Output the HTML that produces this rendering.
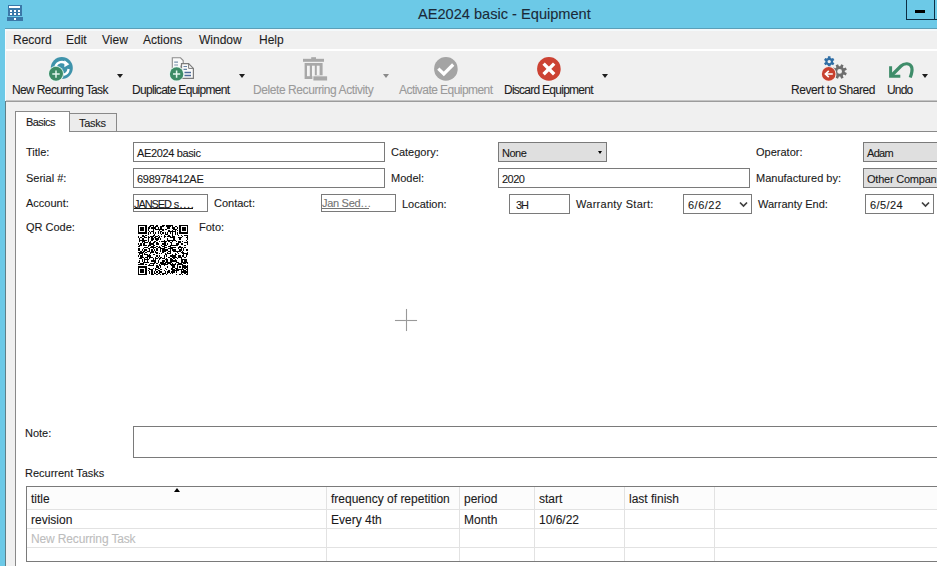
<!DOCTYPE html>
<html><head><meta charset="utf-8">
<style>
html,body{margin:0;padding:0;}
body{width:937px;height:566px;overflow:hidden;position:relative;background:#f0f0f0;font-family:"Liberation Sans",sans-serif;color:#000;}
.t{-webkit-text-stroke:0.1px currentColor;}
.a{position:absolute;}
.t{position:absolute;white-space:nowrap;}
.m{font-size:12px;line-height:12px;color:#1e1e1e;}
.tb{font-size:12px;line-height:12px;color:#1e1e1e;letter-spacing:-0.55px;}
.dis{color:#9a9a9a;}
.l{font-size:11px;line-height:11px;color:#1a1a1a;}
.box{position:absolute;box-sizing:border-box;border:1px solid #7a7a7a;background:#fff;}
.gbox{position:absolute;box-sizing:border-box;border:1px solid #7a7a7a;background:#dfdfdf;}
.g{font-size:12px;line-height:12px;color:#1a1a1a;}
.arr{position:absolute;width:0;height:0;border-left:3.5px solid transparent;border-right:3.5px solid transparent;border-top:4px solid #1e1e1e;}
</style></head>
<body>
<!-- title bar -->
<div class="a" style="left:0;top:0;width:937px;height:29px;background:#6cc9e7;"></div>
<div class="a" style="left:5px;top:28px;width:932px;height:1px;background:#5b9fb8;"></div>
<div class="a" style="left:0;top:0;width:5px;height:566px;background:#6cc9e7;"></div>
<div class="a" style="left:5px;top:29px;width:1px;height:72px;background:#f6fbfd;"></div>
<div class="a" style="left:5px;top:101px;width:1px;height:465px;background:#5f7f88;"></div>
<!-- app icon -->
<svg class="a" style="left:7px;top:5px" width="16" height="16" viewBox="0 0 16 16">
<rect x="1" y="0" width="14" height="11" fill="#3b78a8"/>
<rect x="2" y="1" width="11" height="2" fill="#fff"/>
<rect x="3" y="5" width="2" height="2" fill="#fff"/><rect x="7" y="5" width="2" height="2" fill="#fff"/><rect x="11" y="5" width="2" height="2" fill="#fff"/>
<rect x="3" y="8" width="2" height="2" fill="#fff"/><rect x="7" y="8" width="2" height="2" fill="#fff"/><rect x="11" y="8" width="2" height="2" fill="#fff"/>
<rect x="0" y="12" width="16" height="4" fill="#3b78a8"/>
<rect x="7" y="13" width="2" height="2" fill="#fff"/>
</svg>
<div class="t" style="left:418px;top:7px;font-size:14.6px;line-height:15px;color:#1b2a38;">AE2024 basic - Equipment</div>
<!-- minimize -->
<div class="a" style="left:906px;top:-1px;width:27px;height:20px;border:1px solid #0d2f45;border-top:none;"></div>
<div class="a" style="left:915px;top:10px;width:10px;height:3px;background:#000;"></div>
<div class="a" style="left:934px;top:19px;width:3px;height:1px;background:#0d2f45;"></div>

<!-- menu -->
<div class="a" style="left:6px;top:29px;width:931px;height:2px;background:#f4f9fb;"></div>
<div class="a" style="left:6px;top:49px;width:931px;height:2px;background:#ffffff;"></div>
<div class="t m" style="left:13px;top:34px;">Record</div>
<div class="t m" style="left:66px;top:34px;">Edit</div>
<div class="t m" style="left:102px;top:34px;">View</div>
<div class="t m" style="left:143px;top:34px;">Actions</div>
<div class="t m" style="left:199px;top:34px;">Window</div>
<div class="t m" style="left:259px;top:34px;">Help</div>

<!-- toolbar -->
<div class="a" style="left:6px;top:100px;width:931px;height:1px;background:#c4c4c4;"></div>
<div class="a" style="left:6px;top:101px;width:931px;height:1px;background:#9c9c9c;"></div>
<div class="t tb" style="left:12px;top:84px;letter-spacing:-0.63px;">New Recurring Task</div>
<div class="t tb" style="left:132px;top:84px;letter-spacing:-0.7px;">Duplicate Equipment</div>
<div class="t tb dis" style="left:253px;top:84px;letter-spacing:-0.42px;">Delete Recurring Activity</div>
<div class="t tb dis" style="left:399px;top:84px;">Activate Equipment</div>
<div class="t tb" style="left:504px;top:84px;letter-spacing:-0.74px;">Discard Equipment</div>
<div class="t tb" style="left:791px;top:84px;letter-spacing:-0.42px;">Revert to Shared</div>
<div class="t tb" style="left:887px;top:84px;letter-spacing:-0.8px;">Undo</div>
<div class="arr" style="left:117px;top:74px;"></div>
<div class="arr" style="left:239px;top:74px;"></div>
<div class="arr" style="left:383px;top:74px;border-top-color:#8a8a8a;"></div>
<div class="arr" style="left:602px;top:74px;"></div>
<div class="arr" style="left:922px;top:74px;"></div>

<!-- toolbar icons -->
<svg class="a" style="left:0;top:0" width="937" height="102" viewBox="0 0 937 102">
<!-- new recurring -->
<circle cx="61.8" cy="68" r="11" fill="#3f93ab"/>
<path d="M55.5 66.5 A6.8 6.8 0 0 1 66.5 63.8" fill="none" stroke="#fff" stroke-width="2.3"/>
<path d="M64.5 60.2 L69.3 64.2 L64.3 67.2 Z" fill="#fff"/>
<path d="M68.6 69 A6.8 6.8 0 0 1 63.5 74.8" fill="none" stroke="#fff" stroke-width="2.3"/>
<circle cx="56" cy="73.8" r="7.9" fill="#e6f7f2"/>
<circle cx="56" cy="73.8" r="7" fill="#3d8b66"/>
<path d="M52.3 74.1 H59.7 M56 70.4 V77.8" stroke="#e4f6ee" stroke-width="1.5"/>
<!-- duplicate -->
<path d="M172.3 57.8 H180.5 L183.2 60.5 V66 H181 V78 H172.3 Z" fill="#fafafa" stroke="#8c8c8c" stroke-width="1.1"/>
<path d="M174.2 62.2 H178 M174.2 65 H178" stroke="#7891ab" stroke-width="1.2"/>
<path d="M181.5 63.6 H188.6 L193.4 68.4 V78.3 H181.5 Z" fill="#fafafa" stroke="#7c7c7c" stroke-width="1.2"/>
<path d="M188.6 63.6 V68.4 H193.4" fill="none" stroke="#7c7c7c" stroke-width="1"/>
<path d="M183.5 66.5 H187 M183.5 69.3 H187" stroke="#6a86a8" stroke-width="1.2"/>
<path d="M184.5 72.5 H191 M184.5 75.5 H191" stroke="#4c6b9a" stroke-width="1.4"/>
<circle cx="176.6" cy="73.9" r="7.5" fill="#e6f7f2"/>
<circle cx="176.6" cy="73.9" r="6.7" fill="#3d8b66"/>
<path d="M173 74.1 H180.2 M176.6 70.5 V77.7" stroke="#e4f6ee" stroke-width="1.5"/>
<!-- trash -->
<rect x="311.2" y="57.2" width="4.8" height="2" fill="#a8a8a8"/>
<rect x="303" y="58.8" width="21" height="3" fill="#a8a8a8"/>
<path d="M304.6 63 H322.6 V76 H313 V79 H304.6 Z" fill="#a8a8a8"/>
<rect x="307" y="65.7" width="2.8" height="10.5" fill="#f4f4f4"/>
<rect x="312" y="65.7" width="2.8" height="10.5" fill="#f4f4f4"/>
<rect x="316.8" y="65.7" width="2.8" height="9.5" fill="#f4f4f4"/>
<rect x="312.4" y="75.3" width="15.6" height="6" fill="#f0f0f0"/>
<rect x="313.4" y="76.3" width="13.7" height="4.2" fill="#a8a8a8"/>
<!-- check -->
<circle cx="445.9" cy="68.9" r="11.8" fill="#a4a4a4"/>
<path d="M438.3 68.6 L443.8 73.9 L453.2 64.5" fill="none" stroke="#fff" stroke-width="3.2"/>
<!-- discard -->
<circle cx="548.9" cy="68.9" r="11.8" fill="#cc4233"/>
<path d="M543.6 63.6 L554.2 74.2 M554.2 63.6 L543.6 74.2" stroke="#fff" stroke-width="3.4"/>
<!-- revert gears -->
<path d="M827.82 57.95 L827.94 56.35 L830.46 56.35 L830.58 57.95 L831.67 58.58 L833.12 57.88 L834.38 60.07 L833.05 60.97 L833.05 62.23 L834.38 63.13 L833.12 65.32 L831.67 64.62 L830.58 65.25 L830.46 66.85 L827.94 66.85 L827.82 65.25 L826.73 64.62 L825.28 65.32 L824.02 63.13 L825.35 62.23 L825.35 60.97 L824.02 60.07 L825.28 57.88 L826.73 58.58Z M830.90 61.60 A1.7 1.7 0 1 0 827.50 61.60 A1.7 1.7 0 1 0 830.90 61.60Z" fill="#2f6ea5" fill-rule="evenodd"/>
<path d="M840.23 66.24 L841.19 64.17 L843.59 65.17 L842.80 67.30 L843.70 68.20 L845.83 67.41 L846.83 69.81 L844.76 70.77 L844.76 72.03 L846.83 72.99 L845.83 75.39 L843.70 74.60 L842.80 75.50 L843.59 77.63 L841.19 78.63 L840.23 76.56 L838.97 76.56 L838.01 78.63 L835.61 77.63 L836.40 75.50 L835.50 74.60 L833.37 75.39 L832.37 72.99 L834.44 72.03 L834.44 70.77 L832.37 69.81 L833.37 67.41 L835.50 68.20 L836.40 67.30 L835.61 65.17 L838.01 64.17 L838.97 66.24Z M842.00 71.40 A2.4 2.4 0 1 0 837.20 71.40 A2.4 2.4 0 1 0 842.00 71.40Z" fill="#6e6e6e" fill-rule="evenodd"/>
<circle cx="828.7" cy="73.9" r="7.7" fill="#fbe9e6"/>
<circle cx="828.7" cy="73.9" r="6.8" fill="#c8402e"/>
<path d="M832.8 74 H826 M828.8 70.8 L825.4 74 L828.8 77.2" fill="none" stroke="#fff" stroke-width="1.6"/>
<!-- undo -->
<path d="M891.5 75.5 L901 66 C904 63 910.5 62.5 911.8 67.5 C912.6 71 911.6 74 910.2 77.5" fill="none" stroke="#3f8d6a" stroke-width="3.2"/>
<path d="M890.6 66.3 V76.2 H900.3" fill="none" stroke="#3f8d6a" stroke-width="3"/>
</svg>

<!-- tabs -->
<div class="a" style="left:15px;top:111px;width:55px;height:21px;box-sizing:border-box;border:1px solid #898989;border-bottom:none;background:#fff;z-index:2;"></div>
<div class="a" style="left:68px;top:113px;width:49px;height:19px;box-sizing:border-box;border:1px solid #898989;background:#ececec;"></div>
<div class="a" style="left:15px;top:131px;width:922px;height:435px;box-sizing:border-box;border:1px solid #898989;border-right:none;border-bottom:none;background:#fff;"></div>
<div class="a" style="left:16px;top:130px;width:53px;height:2px;background:#fff;z-index:3;"></div>
<div class="t l" style="left:26px;top:117px;z-index:4;letter-spacing:-0.6px;">Basics</div>
<div class="t l" style="left:79px;top:118px;letter-spacing:-0.3px;">Tasks</div>

<!-- form -->
<div class="t l" style="left:26px;top:147px;">Title:</div>
<div class="t l" style="left:26px;top:173px;">Serial #:</div>
<div class="t l" style="left:26px;top:198px;">Account:</div>
<div class="t l" style="left:26px;top:222px;">QR Code:</div>
<div class="t l" style="left:199px;top:222px;">Foto:</div>
<div class="t l" style="left:25px;top:428px;">Note:</div>
<div class="t l" style="left:25px;top:468px;">Recurrent Tasks</div>
<div class="t l" style="left:214px;top:198px;">Contact:</div>
<div class="t l" style="left:391px;top:147px;">Category:</div>
<div class="t l" style="left:391px;top:173px;">Model:</div>
<div class="t l" style="left:402px;top:199px;">Location:</div>
<div class="t l" style="left:576px;top:199px;letter-spacing:0.27px;">Warranty Start:</div>
<div class="t l" style="left:756px;top:147px;">Operator:</div>
<div class="t l" style="left:756px;top:173px;">Manufactured by:</div>
<div class="t l" style="left:758px;top:199px;">Warranty End:</div>

<div class="box" style="left:133px;top:142px;width:252px;height:20px;"></div>
<div class="t l" style="left:137px;top:148px;letter-spacing:-0.36px;">AE2024 basic</div>
<div class="box" style="left:133px;top:168px;width:252px;height:20px;"></div>
<div class="t l" style="left:137px;top:174px;letter-spacing:-0.3px;">698978412AE</div>
<div class="box" style="left:133px;top:194px;width:75px;height:18px;"></div>
<div class="t l" style="left:134px;top:199px;"><span style="letter-spacing:-1.1px">JANSED</span> s<span style="letter-spacing:0.7px">....</span></div><div class="a" style="left:134px;top:208px;width:59px;height:1px;background:#1a1a1a;"></div>
<div class="box" style="left:321px;top:194px;width:75px;height:18px;"></div>
<div class="t l" style="left:322px;top:198px;color:#747474;letter-spacing:-0.3px;">Jan Sed…</div><div class="a" style="left:322px;top:208px;width:47px;height:1px;background:#747474;"></div>

<div class="gbox" style="left:498px;top:142px;width:109px;height:20px;"></div>
<div class="t l" style="left:502px;top:148px;letter-spacing:-0.5px;">None</div>
<div class="a" style="left:598px;top:151px;width:0;height:0;border-left:2.5px solid transparent;border-right:2.5px solid transparent;border-top:3px solid #000;"></div>
<div class="box" style="left:498px;top:168px;width:252px;height:20px;"></div>
<div class="t l" style="left:502px;top:174px;letter-spacing:-0.5px;">2020</div>
<div class="box" style="left:509px;top:194px;width:61px;height:20px;"></div>
<div class="t l" style="left:516px;top:200px;letter-spacing:-1px;">3H</div>
<div class="box" style="left:683px;top:194px;width:69px;height:20px;"></div>
<div class="t l" style="left:688px;top:200px;letter-spacing:0.5px;">6/6/22</div>
<svg class="a" style="left:739px;top:201px" width="9" height="7" viewBox="0 0 9 7"><path d="M1 1.5 L4.5 5 L8 1.5" fill="none" stroke="#404040" stroke-width="1.7"/></svg>

<div class="gbox" style="left:863px;top:142px;width:80px;height:20px;"></div>
<div class="t l" style="left:867px;top:148px;letter-spacing:-0.7px;">Adam</div>
<div class="gbox" style="left:863px;top:168px;width:80px;height:20px;"></div>
<div class="t l" style="left:867px;top:174px;letter-spacing:-0.22px;">Other Compan</div>
<div class="box" style="left:865px;top:194px;width:69px;height:20px;"></div>
<div class="t l" style="left:870px;top:200px;letter-spacing:0.4px;">6/5/24</div>
<svg class="a" style="left:921px;top:201px" width="9" height="7" viewBox="0 0 9 7"><path d="M1 1.5 L4.5 5 L8 1.5" fill="none" stroke="#404040" stroke-width="1.7"/></svg>

<!-- qr -->
<svg class="a" style="left:138px;top:225px" width="50" height="50" viewBox="0 0 50 50" shape-rendering="crispEdges"><path d="M0.00 0.00h8.54v1.22h-8.54zM12.20 0.00h3.66v1.22h-3.66zM18.29 0.00h1.22v1.22h-1.22zM24.39 0.00h2.44v1.22h-2.44zM28.05 0.00h7.32v1.22h-7.32zM41.46 0.00h8.54v1.22h-8.54zM0.00 1.22h1.22v1.22h-1.22zM7.32 1.22h1.22v1.22h-1.22zM10.98 1.22h2.44v1.22h-2.44zM14.63 1.22h1.22v1.22h-1.22zM17.07 1.22h2.44v1.22h-2.44zM21.95 1.22h3.66v1.22h-3.66zM28.05 1.22h4.88v1.22h-4.88zM34.15 1.22h1.22v1.22h-1.22zM36.59 1.22h2.44v1.22h-2.44zM41.46 1.22h1.22v1.22h-1.22zM48.78 1.22h1.22v1.22h-1.22zM0.00 2.44h1.22v1.22h-1.22zM2.44 2.44h3.66v1.22h-3.66zM7.32 2.44h1.22v1.22h-1.22zM9.76 2.44h2.44v1.22h-2.44zM13.41 2.44h4.88v1.22h-4.88zM19.51 2.44h1.22v1.22h-1.22zM21.95 2.44h2.44v1.22h-2.44zM29.27 2.44h2.44v1.22h-2.44zM34.15 2.44h2.44v1.22h-2.44zM39.02 2.44h1.22v1.22h-1.22zM41.46 2.44h1.22v1.22h-1.22zM43.90 2.44h3.66v1.22h-3.66zM48.78 2.44h1.22v1.22h-1.22zM0.00 3.66h1.22v1.22h-1.22zM2.44 3.66h3.66v1.22h-3.66zM7.32 3.66h1.22v1.22h-1.22zM9.76 3.66h1.22v1.22h-1.22zM14.63 3.66h1.22v1.22h-1.22zM17.07 3.66h8.54v1.22h-8.54zM26.83 3.66h2.44v1.22h-2.44zM35.37 3.66h3.66v1.22h-3.66zM41.46 3.66h1.22v1.22h-1.22zM43.90 3.66h3.66v1.22h-3.66zM48.78 3.66h1.22v1.22h-1.22zM0.00 4.88h1.22v1.22h-1.22zM2.44 4.88h3.66v1.22h-3.66zM7.32 4.88h1.22v1.22h-1.22zM9.76 4.88h1.22v1.22h-1.22zM14.63 4.88h1.22v1.22h-1.22zM20.73 4.88h1.22v1.22h-1.22zM24.39 4.88h1.22v1.22h-1.22zM30.49 4.88h1.22v1.22h-1.22zM34.15 4.88h1.22v1.22h-1.22zM36.59 4.88h1.22v1.22h-1.22zM39.02 4.88h1.22v1.22h-1.22zM41.46 4.88h1.22v1.22h-1.22zM43.90 4.88h3.66v1.22h-3.66zM48.78 4.88h1.22v1.22h-1.22zM0.00 6.10h1.22v1.22h-1.22zM7.32 6.10h1.22v1.22h-1.22zM10.98 6.10h1.22v1.22h-1.22zM13.41 6.10h2.44v1.22h-2.44zM19.51 6.10h1.22v1.22h-1.22zM21.95 6.10h2.44v1.22h-2.44zM30.49 6.10h7.32v1.22h-7.32zM41.46 6.10h1.22v1.22h-1.22zM48.78 6.10h1.22v1.22h-1.22zM0.00 7.32h8.54v1.22h-8.54zM9.76 7.32h1.22v1.22h-1.22zM12.20 7.32h1.22v1.22h-1.22zM14.63 7.32h1.22v1.22h-1.22zM17.07 7.32h1.22v1.22h-1.22zM19.51 7.32h1.22v1.22h-1.22zM21.95 7.32h1.22v1.22h-1.22zM24.39 7.32h1.22v1.22h-1.22zM26.83 7.32h1.22v1.22h-1.22zM29.27 7.32h1.22v1.22h-1.22zM31.71 7.32h1.22v1.22h-1.22zM34.15 7.32h1.22v1.22h-1.22zM36.59 7.32h1.22v1.22h-1.22zM39.02 7.32h1.22v1.22h-1.22zM41.46 7.32h8.54v1.22h-8.54zM9.76 8.54h1.22v1.22h-1.22zM15.85 8.54h1.22v1.22h-1.22zM23.17 8.54h1.22v1.22h-1.22zM26.83 8.54h3.66v1.22h-3.66zM34.15 8.54h1.22v1.22h-1.22zM36.59 8.54h1.22v1.22h-1.22zM39.02 8.54h1.22v1.22h-1.22zM3.66 9.76h2.44v1.22h-2.44zM7.32 9.76h1.22v1.22h-1.22zM14.63 9.76h2.44v1.22h-2.44zM19.51 9.76h1.22v1.22h-1.22zM25.61 9.76h1.22v1.22h-1.22zM30.49 9.76h1.22v1.22h-1.22zM34.15 9.76h1.22v1.22h-1.22zM40.24 9.76h1.22v1.22h-1.22zM42.68 9.76h1.22v1.22h-1.22zM46.34 9.76h3.66v1.22h-3.66zM0.00 10.98h1.22v1.22h-1.22zM3.66 10.98h3.66v1.22h-3.66zM9.76 10.98h1.22v1.22h-1.22zM12.20 10.98h3.66v1.22h-3.66zM17.07 10.98h2.44v1.22h-2.44zM20.73 10.98h1.22v1.22h-1.22zM23.17 10.98h1.22v1.22h-1.22zM25.61 10.98h2.44v1.22h-2.44zM29.27 10.98h3.66v1.22h-3.66zM34.15 10.98h2.44v1.22h-2.44zM43.90 10.98h1.22v1.22h-1.22zM48.78 10.98h1.22v1.22h-1.22zM0.00 12.20h1.22v1.22h-1.22zM2.44 12.20h1.22v1.22h-1.22zM6.10 12.20h2.44v1.22h-2.44zM9.76 12.20h2.44v1.22h-2.44zM13.41 12.20h1.22v1.22h-1.22zM15.85 12.20h2.44v1.22h-2.44zM19.51 12.20h2.44v1.22h-2.44zM25.61 12.20h1.22v1.22h-1.22zM31.71 12.20h4.88v1.22h-4.88zM40.24 12.20h3.66v1.22h-3.66zM47.56 12.20h2.44v1.22h-2.44zM1.22 13.41h1.22v1.22h-1.22zM3.66 13.41h2.44v1.22h-2.44zM9.76 13.41h1.22v1.22h-1.22zM13.41 13.41h2.44v1.22h-2.44zM17.07 13.41h3.66v1.22h-3.66zM21.95 13.41h1.22v1.22h-1.22zM29.27 13.41h1.22v1.22h-1.22zM35.37 13.41h1.22v1.22h-1.22zM41.46 13.41h1.22v1.22h-1.22zM48.78 13.41h1.22v1.22h-1.22zM1.22 14.63h7.32v1.22h-7.32zM9.76 14.63h1.22v1.22h-1.22zM13.41 14.63h1.22v1.22h-1.22zM18.29 14.63h1.22v1.22h-1.22zM25.61 14.63h1.22v1.22h-1.22zM29.27 14.63h8.54v1.22h-8.54zM47.56 14.63h1.22v1.22h-1.22zM1.22 15.85h1.22v1.22h-1.22zM3.66 15.85h3.66v1.22h-3.66zM9.76 15.85h1.22v1.22h-1.22zM12.20 15.85h1.22v1.22h-1.22zM15.85 15.85h2.44v1.22h-2.44zM20.73 15.85h1.22v1.22h-1.22zM23.17 15.85h6.10v1.22h-6.10zM30.49 15.85h1.22v1.22h-1.22zM34.15 15.85h1.22v1.22h-1.22zM37.80 15.85h1.22v1.22h-1.22zM40.24 15.85h2.44v1.22h-2.44zM43.90 15.85h1.22v1.22h-1.22zM48.78 15.85h1.22v1.22h-1.22zM3.66 17.07h1.22v1.22h-1.22zM6.10 17.07h3.66v1.22h-3.66zM10.98 17.07h2.44v1.22h-2.44zM14.63 17.07h2.44v1.22h-2.44zM18.29 17.07h1.22v1.22h-1.22zM25.61 17.07h2.44v1.22h-2.44zM31.71 17.07h2.44v1.22h-2.44zM40.24 17.07h2.44v1.22h-2.44zM46.34 17.07h3.66v1.22h-3.66zM0.00 18.29h1.22v1.22h-1.22zM2.44 18.29h1.22v1.22h-1.22zM4.88 18.29h2.44v1.22h-2.44zM10.98 18.29h4.88v1.22h-4.88zM18.29 18.29h2.44v1.22h-2.44zM24.39 18.29h3.66v1.22h-3.66zM29.27 18.29h1.22v1.22h-1.22zM32.93 18.29h1.22v1.22h-1.22zM37.80 18.29h3.66v1.22h-3.66zM42.68 18.29h2.44v1.22h-2.44zM48.78 18.29h1.22v1.22h-1.22zM1.22 19.51h2.44v1.22h-2.44zM4.88 19.51h3.66v1.22h-3.66zM9.76 19.51h3.66v1.22h-3.66zM14.63 19.51h2.44v1.22h-2.44zM23.17 19.51h1.22v1.22h-1.22zM25.61 19.51h3.66v1.22h-3.66zM31.71 19.51h8.54v1.22h-8.54zM46.34 19.51h1.22v1.22h-1.22zM0.00 20.73h2.44v1.22h-2.44zM9.76 20.73h1.22v1.22h-1.22zM13.41 20.73h2.44v1.22h-2.44zM18.29 20.73h1.22v1.22h-1.22zM20.73 20.73h1.22v1.22h-1.22zM24.39 20.73h2.44v1.22h-2.44zM30.49 20.73h2.44v1.22h-2.44zM41.46 20.73h1.22v1.22h-1.22zM6.10 21.95h3.66v1.22h-3.66zM12.20 21.95h6.10v1.22h-6.10zM19.51 21.95h3.66v1.22h-3.66zM25.61 21.95h3.66v1.22h-3.66zM31.71 21.95h6.10v1.22h-6.10zM40.24 21.95h4.88v1.22h-4.88zM46.34 21.95h1.22v1.22h-1.22zM0.00 23.17h2.44v1.22h-2.44zM4.88 23.17h1.22v1.22h-1.22zM9.76 23.17h2.44v1.22h-2.44zM14.63 23.17h1.22v1.22h-1.22zM18.29 23.17h1.22v1.22h-1.22zM21.95 23.17h4.88v1.22h-4.88zM30.49 23.17h4.88v1.22h-4.88zM40.24 23.17h1.22v1.22h-1.22zM42.68 23.17h1.22v1.22h-1.22zM45.12 23.17h1.22v1.22h-1.22zM0.00 24.39h2.44v1.22h-2.44zM3.66 24.39h1.22v1.22h-1.22zM6.10 24.39h2.44v1.22h-2.44zM10.98 24.39h1.22v1.22h-1.22zM13.41 24.39h1.22v1.22h-1.22zM15.85 24.39h1.22v1.22h-1.22zM18.29 24.39h1.22v1.22h-1.22zM21.95 24.39h1.22v1.22h-1.22zM24.39 24.39h6.10v1.22h-6.10zM31.71 24.39h1.22v1.22h-1.22zM34.15 24.39h3.66v1.22h-3.66zM41.46 24.39h2.44v1.22h-2.44zM45.12 24.39h1.22v1.22h-1.22zM47.56 24.39h2.44v1.22h-2.44zM2.44 25.61h1.22v1.22h-1.22zM4.88 25.61h2.44v1.22h-2.44zM8.54 25.61h3.66v1.22h-3.66zM13.41 25.61h2.44v1.22h-2.44zM17.07 25.61h1.22v1.22h-1.22zM21.95 25.61h1.22v1.22h-1.22zM24.39 25.61h3.66v1.22h-3.66zM30.49 25.61h2.44v1.22h-2.44zM35.37 25.61h7.32v1.22h-7.32zM43.90 25.61h1.22v1.22h-1.22zM0.00 26.83h6.10v1.22h-6.10zM7.32 26.83h1.22v1.22h-1.22zM12.20 26.83h3.66v1.22h-3.66zM17.07 26.83h2.44v1.22h-2.44zM24.39 26.83h1.22v1.22h-1.22zM29.27 26.83h1.22v1.22h-1.22zM31.71 26.83h1.22v1.22h-1.22zM39.02 26.83h1.22v1.22h-1.22zM42.68 26.83h3.66v1.22h-3.66zM48.78 26.83h1.22v1.22h-1.22zM1.22 28.05h3.66v1.22h-3.66zM6.10 28.05h1.22v1.22h-1.22zM12.20 28.05h1.22v1.22h-1.22zM18.29 28.05h1.22v1.22h-1.22zM20.73 28.05h1.22v1.22h-1.22zM23.17 28.05h1.22v1.22h-1.22zM26.83 28.05h1.22v1.22h-1.22zM29.27 28.05h3.66v1.22h-3.66zM36.59 28.05h1.22v1.22h-1.22zM40.24 28.05h1.22v1.22h-1.22zM43.90 28.05h6.10v1.22h-6.10zM1.22 29.27h1.22v1.22h-1.22zM3.66 29.27h1.22v1.22h-1.22zM6.10 29.27h3.66v1.22h-3.66zM10.98 29.27h1.22v1.22h-1.22zM14.63 29.27h2.44v1.22h-2.44zM26.83 29.27h2.44v1.22h-2.44zM34.15 29.27h1.22v1.22h-1.22zM36.59 29.27h2.44v1.22h-2.44zM45.12 29.27h1.22v1.22h-1.22zM47.56 29.27h2.44v1.22h-2.44zM0.00 30.49h1.22v1.22h-1.22zM2.44 30.49h2.44v1.22h-2.44zM8.54 30.49h4.88v1.22h-4.88zM18.29 30.49h1.22v1.22h-1.22zM20.73 30.49h1.22v1.22h-1.22zM25.61 30.49h1.22v1.22h-1.22zM28.05 30.49h1.22v1.22h-1.22zM31.71 30.49h6.10v1.22h-6.10zM40.24 30.49h2.44v1.22h-2.44zM43.90 30.49h2.44v1.22h-2.44zM47.56 30.49h1.22v1.22h-1.22zM2.44 31.71h3.66v1.22h-3.66zM7.32 31.71h2.44v1.22h-2.44zM10.98 31.71h3.66v1.22h-3.66zM17.07 31.71h1.22v1.22h-1.22zM19.51 31.71h1.22v1.22h-1.22zM21.95 31.71h2.44v1.22h-2.44zM25.61 31.71h1.22v1.22h-1.22zM30.49 31.71h1.22v1.22h-1.22zM34.15 31.71h4.88v1.22h-4.88zM40.24 31.71h3.66v1.22h-3.66zM46.34 31.71h1.22v1.22h-1.22zM1.22 32.93h2.44v1.22h-2.44zM6.10 32.93h1.22v1.22h-1.22zM8.54 32.93h1.22v1.22h-1.22zM10.98 32.93h1.22v1.22h-1.22zM14.63 32.93h1.22v1.22h-1.22zM17.07 32.93h2.44v1.22h-2.44zM20.73 32.93h2.44v1.22h-2.44zM24.39 32.93h2.44v1.22h-2.44zM28.05 32.93h1.22v1.22h-1.22zM31.71 32.93h2.44v1.22h-2.44zM35.37 32.93h1.22v1.22h-1.22zM39.02 32.93h1.22v1.22h-1.22zM42.68 32.93h1.22v1.22h-1.22zM3.66 34.15h1.22v1.22h-1.22zM6.10 34.15h4.88v1.22h-4.88zM14.63 34.15h1.22v1.22h-1.22zM17.07 34.15h1.22v1.22h-1.22zM20.73 34.15h1.22v1.22h-1.22zM26.83 34.15h3.66v1.22h-3.66zM31.71 34.15h3.66v1.22h-3.66zM36.59 34.15h1.22v1.22h-1.22zM42.68 34.15h6.10v1.22h-6.10zM1.22 35.37h1.22v1.22h-1.22zM3.66 35.37h1.22v1.22h-1.22zM6.10 35.37h1.22v1.22h-1.22zM8.54 35.37h1.22v1.22h-1.22zM13.41 35.37h4.88v1.22h-4.88zM19.51 35.37h1.22v1.22h-1.22zM24.39 35.37h2.44v1.22h-2.44zM28.05 35.37h2.44v1.22h-2.44zM31.71 35.37h7.32v1.22h-7.32zM42.68 35.37h2.44v1.22h-2.44zM46.34 35.37h2.44v1.22h-2.44zM0.00 36.59h2.44v1.22h-2.44zM4.88 36.59h6.10v1.22h-6.10zM15.85 36.59h2.44v1.22h-2.44zM19.51 36.59h1.22v1.22h-1.22zM21.95 36.59h3.66v1.22h-3.66zM26.83 36.59h7.32v1.22h-7.32zM37.80 36.59h3.66v1.22h-3.66zM42.68 36.59h7.32v1.22h-7.32zM2.44 37.80h3.66v1.22h-3.66zM12.20 37.80h4.88v1.22h-4.88zM18.29 37.80h1.22v1.22h-1.22zM21.95 37.80h6.10v1.22h-6.10zM29.27 37.80h3.66v1.22h-3.66zM34.15 37.80h1.22v1.22h-1.22zM36.59 37.80h1.22v1.22h-1.22zM40.24 37.80h3.66v1.22h-3.66zM45.12 37.80h2.44v1.22h-2.44zM48.78 37.80h1.22v1.22h-1.22zM0.00 39.02h6.10v1.22h-6.10zM7.32 39.02h1.22v1.22h-1.22zM10.98 39.02h1.22v1.22h-1.22zM14.63 39.02h1.22v1.22h-1.22zM20.73 39.02h1.22v1.22h-1.22zM23.17 39.02h7.32v1.22h-7.32zM31.71 39.02h6.10v1.22h-6.10zM39.02 39.02h6.10v1.22h-6.10zM9.76 40.24h6.10v1.22h-6.10zM18.29 40.24h1.22v1.22h-1.22zM20.73 40.24h2.44v1.22h-2.44zM25.61 40.24h1.22v1.22h-1.22zM32.93 40.24h3.66v1.22h-3.66zM39.02 40.24h1.22v1.22h-1.22zM43.90 40.24h3.66v1.22h-3.66zM48.78 40.24h1.22v1.22h-1.22zM0.00 41.46h8.54v1.22h-8.54zM18.29 41.46h2.44v1.22h-2.44zM21.95 41.46h1.22v1.22h-1.22zM29.27 41.46h1.22v1.22h-1.22zM34.15 41.46h2.44v1.22h-2.44zM39.02 41.46h1.22v1.22h-1.22zM41.46 41.46h1.22v1.22h-1.22zM43.90 41.46h6.10v1.22h-6.10zM0.00 42.68h1.22v1.22h-1.22zM7.32 42.68h1.22v1.22h-1.22zM9.76 42.68h2.44v1.22h-2.44zM14.63 42.68h1.22v1.22h-1.22zM17.07 42.68h1.22v1.22h-1.22zM19.51 42.68h2.44v1.22h-2.44zM26.83 42.68h1.22v1.22h-1.22zM32.93 42.68h2.44v1.22h-2.44zM36.59 42.68h3.66v1.22h-3.66zM43.90 42.68h1.22v1.22h-1.22zM46.34 42.68h1.22v1.22h-1.22zM48.78 42.68h1.22v1.22h-1.22zM0.00 43.90h1.22v1.22h-1.22zM2.44 43.90h3.66v1.22h-3.66zM7.32 43.90h1.22v1.22h-1.22zM10.98 43.90h3.66v1.22h-3.66zM17.07 43.90h2.44v1.22h-2.44zM21.95 43.90h2.44v1.22h-2.44zM28.05 43.90h1.22v1.22h-1.22zM32.93 43.90h3.66v1.22h-3.66zM37.80 43.90h8.54v1.22h-8.54zM47.56 43.90h2.44v1.22h-2.44zM0.00 45.12h1.22v1.22h-1.22zM2.44 45.12h3.66v1.22h-3.66zM7.32 45.12h1.22v1.22h-1.22zM9.76 45.12h1.22v1.22h-1.22zM13.41 45.12h1.22v1.22h-1.22zM17.07 45.12h1.22v1.22h-1.22zM19.51 45.12h2.44v1.22h-2.44zM25.61 45.12h1.22v1.22h-1.22zM30.49 45.12h1.22v1.22h-1.22zM34.15 45.12h7.32v1.22h-7.32zM42.68 45.12h1.22v1.22h-1.22zM45.12 45.12h2.44v1.22h-2.44zM48.78 45.12h1.22v1.22h-1.22zM0.00 46.34h1.22v1.22h-1.22zM2.44 46.34h3.66v1.22h-3.66zM7.32 46.34h1.22v1.22h-1.22zM10.98 46.34h1.22v1.22h-1.22zM13.41 46.34h1.22v1.22h-1.22zM15.85 46.34h1.22v1.22h-1.22zM18.29 46.34h1.22v1.22h-1.22zM20.73 46.34h3.66v1.22h-3.66zM26.83 46.34h1.22v1.22h-1.22zM29.27 46.34h2.44v1.22h-2.44zM32.93 46.34h3.66v1.22h-3.66zM37.80 46.34h1.22v1.22h-1.22zM42.68 46.34h7.32v1.22h-7.32zM0.00 47.56h1.22v1.22h-1.22zM7.32 47.56h1.22v1.22h-1.22zM10.98 47.56h1.22v1.22h-1.22zM13.41 47.56h1.22v1.22h-1.22zM15.85 47.56h2.44v1.22h-2.44zM19.51 47.56h2.44v1.22h-2.44zM24.39 47.56h3.66v1.22h-3.66zM29.27 47.56h1.22v1.22h-1.22zM31.71 47.56h1.22v1.22h-1.22zM34.15 47.56h1.22v1.22h-1.22zM42.68 47.56h1.22v1.22h-1.22zM46.34 47.56h1.22v1.22h-1.22zM48.78 47.56h1.22v1.22h-1.22zM0.00 48.78h8.54v1.22h-8.54zM13.41 48.78h2.44v1.22h-2.44zM18.29 48.78h1.22v1.22h-1.22zM21.95 48.78h1.22v1.22h-1.22zM24.39 48.78h1.22v1.22h-1.22zM28.05 48.78h1.22v1.22h-1.22zM37.80 48.78h1.22v1.22h-1.22zM41.46 48.78h1.22v1.22h-1.22zM43.90 48.78h1.22v1.22h-1.22zM47.56 48.78h2.44v1.22h-2.44z" fill="#000"/></svg>
<!-- crosshair -->
<div class="a" style="left:395px;top:320px;width:22px;height:1px;background:#999;box-shadow:0 0 1px #ccc;"></div>
<div class="a" style="left:406px;top:309px;width:1px;height:22px;background:#999;box-shadow:0 0 1px #ccc;"></div>

<div class="box" style="left:133px;top:426px;width:810px;height:32px;"></div>

<!-- grid -->
<div class="a" style="left:26px;top:486px;width:920px;height:76px;box-sizing:border-box;border:1px solid #7a7a7a;border-right:none;background:#fff;"></div>
<div class="a" style="left:27px;top:487px;width:910px;height:22px;background:#fcfcfc;"></div>
<div class="a" style="left:27px;top:509px;width:910px;height:1px;background:#e2e2e2;"></div>
<div class="a" style="left:27px;top:528px;width:910px;height:1px;background:#e2e2e2;"></div>
<div class="a" style="left:27px;top:547px;width:910px;height:1px;background:#e2e2e2;"></div>
<div class="a" style="left:326px;top:487px;width:1px;height:74px;background:#e2e2e2;"></div>
<div class="a" style="left:459px;top:487px;width:1px;height:74px;background:#e2e2e2;"></div>
<div class="a" style="left:534px;top:487px;width:1px;height:74px;background:#e2e2e2;"></div>
<div class="a" style="left:624px;top:487px;width:1px;height:74px;background:#e2e2e2;"></div>
<div class="a" style="left:714px;top:487px;width:1px;height:74px;background:#e2e2e2;"></div>
<div class="a" style="left:174px;top:488px;width:0;height:0;border-left:3.5px solid transparent;border-right:3.5px solid transparent;border-bottom:4px solid #000;"></div>
<div class="t g" style="left:31px;top:493px;">title</div>
<div class="t g" style="left:331px;top:493px;">frequency of repetition</div>
<div class="t g" style="left:464px;top:493px;">period</div>
<div class="t g" style="left:539px;top:493px;">start</div>
<div class="t g" style="left:629px;top:493px;">last finish</div>
<div class="t g" style="left:31px;top:514px;">revision</div>
<div class="t g" style="left:331px;top:514px;">Every 4th</div>
<div class="t g" style="left:464px;top:514px;">Month</div>
<div class="t g" style="left:539px;top:514px;">10/6/22</div>
<div class="t g" style="left:31px;top:533px;color:#bdbdbd;letter-spacing:-0.15px;">New Recurring Task</div>

</body></html>
